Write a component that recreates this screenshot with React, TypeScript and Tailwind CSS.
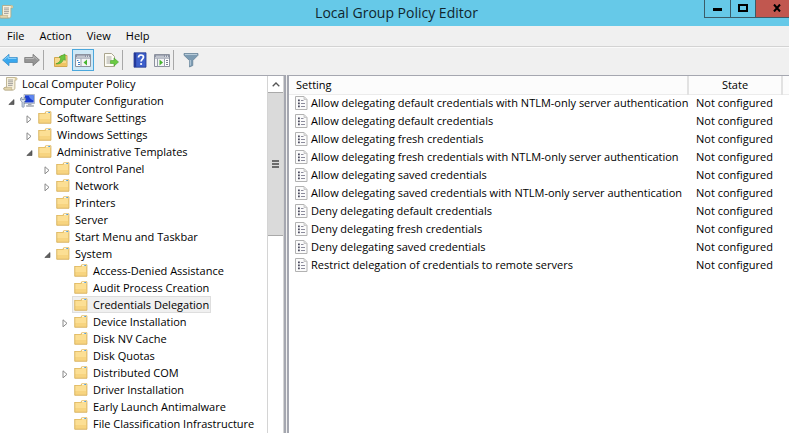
import type { ReactNode } from "react";

type TreeItem = {
  label?: string;
  level: 0 | 1 | 2 | 3 | 4;
  icon: "folder" | "scroll" | "computer";
  state?: "open" | "closed";
  selected?: boolean;
};

const tree: TreeItem[] = [
  { label: "Local Computer Policy", level: 0, icon: "scroll" },
  { label: "Computer Configuration", level: 1, icon: "computer", state: "open" },
  { label: "Software Settings", level: 2, icon: "folder", state: "closed" },
  { label: "Windows Settings", level: 2, icon: "folder", state: "closed" },
  { label: "Administrative Templates", level: 2, icon: "folder", state: "open" },
  { label: "Control Panel", level: 3, icon: "folder", state: "closed" },
  { label: "Network", level: 3, icon: "folder", state: "closed" },
  { label: "Printers", level: 3, icon: "folder" },
  { label: "Server", level: 3, icon: "folder" },
  { label: "Start Menu and Taskbar", level: 3, icon: "folder" },
  { label: "System", level: 3, icon: "folder", state: "open" },
  { label: "Access-Denied Assistance", level: 4, icon: "folder" },
  { label: "Audit Process Creation", level: 4, icon: "folder" },
  { label: "Credentials Delegation", level: 4, icon: "folder", selected: true },
  { label: "Device Installation", level: 4, icon: "folder", state: "closed" },
  { label: "Disk NV Cache", level: 4, icon: "folder" },
  { label: "Disk Quotas", level: 4, icon: "folder" },
  { label: "Distributed COM", level: 4, icon: "folder", state: "closed" },
  { label: "Driver Installation", level: 4, icon: "folder" },
  { label: "Early Launch Antimalware", level: 4, icon: "folder" },
  { label: "File Classification Infrastructure", level: 4, icon: "folder" },
  { level: 4, icon: "folder" },
];

const settings = [
  "Allow delegating default credentials with NTLM-only server authentication",
  "Allow delegating default credentials",
  "Allow delegating fresh credentials",
  "Allow delegating fresh credentials with NTLM-only server authentication",
  "Allow delegating saved credentials",
  "Allow delegating saved credentials with NTLM-only server authentication",
  "Deny delegating default credentials",
  "Deny delegating fresh credentials",
  "Deny delegating saved credentials",
  "Restrict delegation of credentials to remote servers",
];

const indent = {
  0: "pl-[3px]",
  1: "pl-2",
  2: "pl-[26px]",
  3: "pl-[44px]",
  4: "pl-[62px]",
};

function ScrollIcon() {
  return (
    <svg viewBox="0 0 15 15" className="size-[15px] shrink-0" aria-hidden="true">
      <path d="M3.5 1.5h9.2c1.6 0 1.8 2.6.2 2.6h-1V12c0 1.4-.8 2-2 2H2c-1.6 0-1.8-2.6 0-2.6h1.5z" fill="#f7f1de" stroke="#b3a67f" strokeWidth=".8" />
      <path d="M11.8 4.1V2.3c0-.6.5-.9 1-.9 1.5.1 1.6 2.6.1 2.7z" fill="#d9c99a" />
      <path d="M2 11.4h6.8c-.7.8-.5 2.2.6 2.6H2c-1.6-.2-1.6-2.4 0-2.6z" fill="#e3d6ae" stroke="#b3a67f" strokeWidth=".6" />
      <path d="M5 4h5M5 5.8h5M5 7.6h5M5 9.4h4.5" stroke="#8c8c8c" strokeWidth=".8" />
    </svg>
  );
}

function ComputerIcon() {
  return (
    <svg viewBox="0 0 15 15" className="size-[15px] shrink-0" aria-hidden="true">
      <path d="M4 1.5h10.500v9H4z" fill="#dfe3ea" stroke="#9aa2b0" strokeWidth=".7" />
      <path d="M5 2.300h8.700v7.200H5z" fill="#1d3fd0" />
      <path d="M8.500 2.300h5.200v5.200C11 6.800 9.200 5 8.500 2.300z" fill="#5f88f0" />
      <path d="M8 10.800h3.500v1.400H8z" fill="#a4abb6" />
      <path d="M6.500 12.300h7v1.200h-7z" fill="#c2c7d0" stroke="#8d949e" strokeWidth=".5" />
      <path d="M.6 5.200v2.300l1.500 1.300v4.700c0 1 2 1 2 0V8.800l1.500-1.300V5.200l-1.300-.9v2.300H1.900V4.300z" fill="#dfe8f4" stroke="#61748f" strokeWidth=".7" />
    </svg>
  );
}

function FolderIcon() {
  return (
    <svg viewBox="0 0 15 15" className="size-[15px] shrink-0" aria-hidden="true">
      <path d="M.5 3h6l1.200-1.700H13V13.500H.5z" fill="#e6c06a" />
      <path d="M8 2h4.500v2H8z" fill="#f8f5e8" />
      <path d="M10.300 2H12v1.300h-1.700z" fill="#4e9fdc" />
      <path d="M1 4h6.200l1-1h4.400v10H1z" fill="#fcdf94" />
      <path d="M1 9h11.600v4H1z" fill="#f7d480" />
      <path d="M.8 3v10.200H13V1.800" fill="none" stroke="#d6ae58" strokeWidth=".7" />
    </svg>
  );
}

function SettingIcon() {
  return (
    <svg viewBox="0 0 13 14" className="h-3.5 w-[13px] shrink-0" aria-hidden="true">
      <path d="M.5.5h8.500l3 3v10H.5z" fill="#fbfbfb" stroke="#b2b2b2" />
      <path d="M9 .5v3h3" fill="#dedede" stroke="#c0c0c0" strokeWidth=".8" />
      <path d="M3 3.500h1.800v1.800H3zM3 6.500h1.800v1.800H3zM3 9.500h1.800v1.800H3z" fill="#4d4d60" />
      <path d="M6 4.500h2.500M6 7.500h4M6 10.500h4" stroke="#8c8c9c" />
    </svg>
  );
}

function Expander({ state, label }: { state: "open" | "closed"; label?: string }) {
  return (
    <button type="button" aria-label={`${state === "open" ? "Collapse" : "Expand"} ${label}`} className="flex h-full w-3 items-center">
      <svg viewBox="0 0 7 9" className="mt-1 h-[9px] w-[7px]" aria-hidden="true">
        {state === "open" ? (
          <path d="M6 1.500v5H.8z" fill="#606060" stroke="#404040" strokeWidth=".6" />
        ) : (
          <path d="M1 .8v7l4-3.500z" fill="#fff" stroke="#8a8a8a" />
        )}
      </svg>
    </button>
  );
}

function TreeRow({ item }: { item: TreeItem }) {
  const hasSlot = item.level > 0;
  return (
    <li role="treeitem" aria-selected={!!item.selected} className={`flex h-[17px] items-center ${indent[item.level]}`}>
      {hasSlot && (item.state ? <Expander state={item.state} label={item.label} /> : <span className="w-3 shrink-0" />)}
      <span
        className={`-ml-0.5 flex h-full items-center gap-1 pr-0.5 pl-0.5 whitespace-nowrap ${
          item.selected ? "bg-[#f0f0f0] outline outline-[#dedede] -outline-offset-1" : ""
        }`}
      >
        {item.icon === "scroll" && <ScrollIcon />}
        {item.icon === "computer" && <ComputerIcon />}
        {item.icon === "folder" && <FolderIcon />}
        {item.label}
      </span>
    </li>
  );
}

function ToolButton({ label, active, children }: { label: string; active?: boolean; children: ReactNode }) {
  return (
    <button
      type="button"
      aria-label={label}
      className={`flex h-[22px] w-[22px] items-center justify-center border ${active ? "border-[#4ba7dc] bg-[#cfe8f6]" : "border-transparent"}`}
    >
      <svg viewBox="0 0 16 16" className="size-4 shrink-0" aria-hidden="true">
        {children}
      </svg>
    </button>
  );
}

function Divider() {
  return <span className="h-5 w-px bg-[#a8a8a8]" />;
}

function WindowGlyph() {
  return (
    <>
      <path d="M.5 2.500h15v12H.5z" fill="#f4f4f6" stroke="#8d929e" />
      <path d="M1 3h14v2.500H1z" fill="#8b92a3" />
      <path d="M2 4.200h8" stroke="#d9dce3" />
      <path d="M11 4.200h1M13 4.200h1" stroke="#fff" />
      <path d="M1 6.500h14" stroke="#b9bdc8" />
    </>
  );
}

function Toolbar() {
  return (
    <div role="toolbar" aria-label="Standard" className="flex h-7 items-center border-t border-[#fafafa] bg-[#f0f0f0] pb-[3px]">
      <span className="-ml-px" />
      <ToolButton label="Back">
        <path d="M.6 8 7 2.300v3.200h8.300v5H7v3.200z" fill="#38a7ee" stroke="#3f8fc8" strokeWidth=".8" />
        <path d="M2.500 7.500 6.200 4.200v2.200h8.200" fill="none" stroke="#8cd2fa" />
      </ToolButton>
      <ToolButton label="Forward">
        <path d="M15.400 8 9 2.300v3.200H.7v5H9v3.200z" fill="#959595" stroke="#787878" strokeWidth=".8" />
        <path d="M1.500 6.500h8.300V4.300l3.700 3.300" fill="none" stroke="#b9b9b9" />
      </ToolButton>
      <Divider />
      <span className="w-1.5" />
      <ToolButton label="Up one level">
        <path d="M1.500 5.500h5l1.500-2h6V14.500H1.500z" fill="#f8d98a" stroke="#cda044" strokeWidth=".9" />
        <path d="M2 11h11.500v3H2z" fill="#f0c564" />
        <path d="M3 11.800c3-.8 4.600-2.800 4.800-5.300L6 5l6-3 .3 6.300-1.800-1c-.8 3-3.500 5-7.500 4.500z" fill="#6cc63f" stroke="#3f9a2c" strokeWidth=".6" />
      </ToolButton>
      <ToolButton label="Show or hide console tree" active>
        <WindowGlyph />
        <path d="M1.500 7h4v7h-4z" fill="#fff" />
        <path d="M2 8.500h1.500M3 10.500h2M3 12.500h2" stroke="#3f7fc4" />
        <path d="M6 6.500v8" stroke="#9aa0ae" />
        <path d="M12 7.500v6L8.500 10.500z" fill="#47b52f" />
      </ToolButton>
      <span className="w-1.5" />
      <ToolButton label="Export list">
        <path d="M1.500 1.500h7l3 3v10h-10z" fill="#fdfcf3" stroke="#aaa58f" />
        <path d="M3.500 5h5M3.500 7h5M3.500 9h4M3.500 11h4" stroke="#8f8f8f" strokeWidth=".8" />
        <path d="M7.500 8.500h3.500V6l4.500 4-4.500 4v-2.500H7.500z" fill="#6bcb42" stroke="#44a02b" strokeWidth=".6" />
      </ToolButton>
      <Divider />
      <span className="w-1.5" />
      <ToolButton label="Help">
        <path d="M2 .8h12v14.400H2z" fill="#3d5fcb" stroke="#23398f" strokeWidth=".8" />
        <path d="M2 1h2.200v14H2z" fill="#24399a" />
        <path d="M6.500 5.500c0-3.300 5-3.200 5-.4 0 1.900-2.400 2-2.400 4.400" fill="none" stroke="#fff" strokeWidth="1.700" />
        <circle cx="9.100" cy="12" r="1.100" fill="#fff" />
      </ToolButton>
      <ToolButton label="Show or hide action pane">
        <WindowGlyph />
        <path d="M11 7h4v7h-4z" fill="#fff" />
        <path d="M12 8.500h2M12 10.500h2M12 12.500h2" stroke="#7b8292" />
        <path d="M10.500 6.500v8M3.500 6.500v8" stroke="#9aa0ae" />
        <path d="M5.500 7.500v6L9 10.500z" fill="#47b52f" />
      </ToolButton>
      <Divider />
      <span className="w-1.5" />
      <ToolButton label="Filter">
        <path d="M1 1.500h14v1.800L9.800 8.500v5L6.500 15V8.500L1 3.300z" fill="#7d9bb2" stroke="#607d94" strokeWidth=".7" />
        <path d="M1.800 2h12.400v1H1.800z" fill="#b7cbd9" />
        <path d="M7.300 8v5.500" stroke="#b7cbd9" />
      </ToolButton>
    </div>
  );
}

function TitleBar() {
  return (
    <header className="relative flex h-[26px] items-center justify-center bg-[#66c9e8] pl-1">
      <span className="absolute top-1 -left-px">
        <ScrollIcon />
      </span>
      <h1 className="text-sm leading-none text-[#10262e]">Local Group Policy Editor</h1>
      {/* window buttons hang from the top right corner */}
      <div className="absolute top-0 right-0 flex h-[18px] border-b border-l border-[#3b5c68]">
        <button type="button" aria-label="Minimize" className="flex w-[26px] items-center justify-center border-r border-[#3b5c68]">
          <span className="mt-0.5 h-[3px] w-[9px] bg-black" />
        </button>
        <button type="button" aria-label="Maximize" className="flex w-[25px] items-center justify-center border-r border-[#3b5c68]">
          <span className="mb-0.5 h-2 w-2.5 border-2 border-black" />
        </button>
        <button type="button" aria-label="Close" className="flex w-[33px] items-center justify-center bg-[#c1574f] pl-2">
          <svg viewBox="0 0 8 8" className="mb-0.5 size-2" aria-hidden="true">
            <path d="M1 .5 7 7.500M7 .5 1 7.500" stroke="#000" strokeWidth="2" />
          </svg>
        </button>
      </div>
    </header>
  );
}

function TreePane() {
  return (
    <nav aria-label="Console tree" className="flex w-[286px] shrink-0 overflow-hidden border-t border-r-2 border-[#a5a7b0] bg-white">
      <ul role="tree" className="-mt-px min-w-0 flex-1 overflow-hidden">
        {tree.map((item, i) => (
          <TreeRow key={i} item={item} />
        ))}
      </ul>
      <div className="flex w-[17px] flex-col border-x border-[#d4d4d4] bg-white">
        <button type="button" aria-label="Scroll up" className="flex h-4 shrink-0 items-center justify-center">
          <svg viewBox="0 0 8 5" className="h-[5px] w-2" aria-hidden="true">
            <path d="M.7 4.300 4 1l3.300 3.300" fill="none" stroke="#555" strokeWidth="1.300" />
          </svg>
        </button>
        <div className="flex h-36 shrink-0 flex-col items-center justify-center gap-px border-y border-[#a9a9a9] bg-[#dadada]">
          <span className="h-0.5 w-[7px] bg-[#6b6b6b]" />
          <span className="h-0.5 w-[7px] bg-[#6b6b6b]" />
          <span className="h-0.5 w-[7px] bg-[#6b6b6b]" />
        </div>
      </div>
    </nav>
  );
}

function SettingsPane() {
  return (
    <main className="min-w-0 flex-1 overflow-hidden border-t border-l-2 border-[#a5a7b0] bg-white">
      <table className="w-full table-fixed border-collapse text-left">
        <colgroup>
          <col />
          <col className="w-[94px]" />
          <col className="w-[7px]" />
        </colgroup>
        <thead>
          <tr className="h-[18px] border-b border-[#ececec] bg-[#fcfcfc]">
            <th className="border-r-2 border-[#e2e2e2] p-0 pl-[7px] font-normal">Setting</th>
            <th className="border-r-2 border-[#e2e2e2] p-0 text-center font-normal">State</th>
            <td className="p-0" />
          </tr>
        </thead>
        <tbody>
          {settings.map((name) => (
            <tr key={name} className="h-[18px]">
              <td className="p-0 pl-1.5">
                <span className="flex items-center gap-[3px] whitespace-nowrap">
                  <SettingIcon />
                  {name}
                </span>
              </td>
              <td className="p-0 pl-2 whitespace-nowrap">Not configured</td>
              <td className="p-0" />
            </tr>
          ))}
        </tbody>
      </table>
    </main>
  );
}

export default function App() {
  return (
    <div className="flex h-screen flex-col overflow-hidden bg-[#f0f0f0] font-['Open_Sans','Noto_Sans',sans-serif] text-[11px] leading-4 text-black">
      <TitleBar />
      <div role="menubar" className="flex h-[21px] items-center gap-[15px] border-b border-[#d3d3d3] bg-[#f0f0f0] pl-[7px]">
        <button type="button" role="menuitem">File</button>
        <button type="button" role="menuitem">Action</button>
        <button type="button" role="menuitem">View</button>
        <button type="button" role="menuitem">Help</button>
      </div>
      <Toolbar />
      <div className="flex min-h-0 flex-1 gap-px">
        <TreePane />
        <SettingsPane />
      </div>
    </div>
  );
}
